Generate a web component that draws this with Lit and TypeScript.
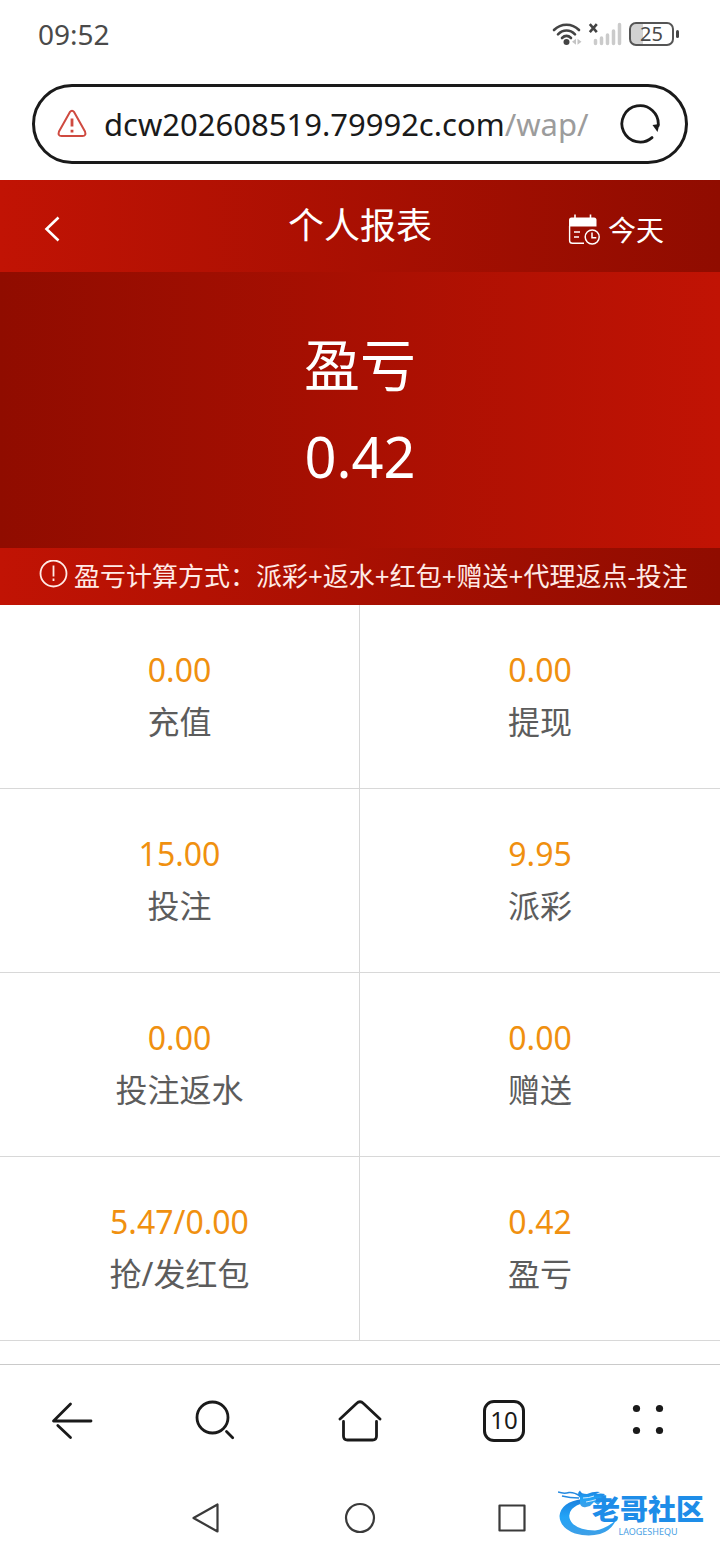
import { LitElement, html, css, svg } from "lit";
import { customElement, property } from "lit/decorators.js";

interface Stat {
  value: string;
  label: string;
}

const STATS: Stat[] = [
  { value: "0.00", label: "充值" },
  { value: "0.00", label: "提现" },
  { value: "15.00", label: "投注" },
  { value: "9.95", label: "派彩" },
  { value: "0.00", label: "投注返水" },
  { value: "0.00", label: "赠送" },
  { value: "5.47/0.00", label: "抢/发红包" },
  { value: "0.42", label: "盈亏" },
];

@customElement("status-bar")
export class StatusBar extends LitElement {
  static styles = css`
    :host {
      display: flex;
      align-items: center;
      justify-content: space-between;
      height: 68px;
      padding: 0 41px 0 38px;
      color: #4a4a4a;
    }
    .time {
      font-size: 28px;
      line-height: 36px;
    }
    .right {
      display: flex;
      align-items: center;
    }
    .battery {
      box-sizing: border-box;
      display: flex;
      align-items: center;
      justify-content: center;
      width: 45px;
      height: 24px;
      margin-left: 6px;
      border: 2px solid #555;
      border-radius: 7px;
      background: linear-gradient(to right, #d2d2d2 30%, #fff 30%);
      font-size: 20px;
      line-height: 20px;
    }
    .cap {
      width: 3px;
      height: 8px;
      margin-left: 2px;
      border-radius: 2px;
      background: #444;
    }
  `;

  render() {
    return html`
      <span class="time">09:52</span>
      <div class="right">
        <svg width="71" height="28" viewBox="0 0 71 28" fill="none" aria-hidden="true">
          <g stroke="#444" stroke-width="2.6" stroke-linecap="round">
            <path d="M2 10C9 3 20 3 27 10" />
            <path d="M6 14.3C11 9.3 18 9.3 23 14.3" />
            <path d="M10 18C12.8 15.2 16.2 15.2 19 18" />
          </g>
          <circle cx="14.500" cy="22" r="3" fill="#444" />
          <path d="M24 18.8v6l-4-3zM25.5 18.8v6l4-3z" fill="#c4c4c4" />
          <path d="M37.8 4.2l7 8M44.8 4.2l-7 8" stroke="#444" stroke-width="2.6" />
          <g stroke="#cbcbcb" stroke-width="3.5" stroke-linecap="round">
            <path d="M43.5 20.5v3M49.5 18v5.5M55.5 15v8.5M61.5 11v12.5M67.5 4.5v19" />
          </g>
        </svg>
        <span class="battery">25</span>
        <span class="cap"></span>
      </div>
    `;
  }
}

@customElement("address-bar")
export class AddressBar extends LitElement {
  static styles = css`
    :host {
      display: block;
      padding: 16px 32px;
    }
    .bar {
      box-sizing: border-box;
      display: flex;
      align-items: center;
      height: 80px;
      padding: 0 24px 0 22px;
      border: 3px solid #1a1a1a;
      border-radius: 40px;
      background: #fff;
    }
    button {
      display: flex;
      padding: 0;
      border: 0;
      background: none;
      color: #1a1a1a;
      font: inherit;
    }
    .url {
      flex: 1;
      min-width: 0;
      margin: 0 26px 0 17px;
      overflow: hidden;
      font-size: 31px;
      line-height: 48px;
      white-space: nowrap;
    }
    .path {
      color: #9c9c9c;
    }
    svg {
      flex: none;
    }
  `;

  render() {
    return html`
      <div class="bar">
        <svg width="30" height="30" viewBox="0 0 30 30" fill="none" stroke="#cf4a40" aria-hidden="true">
          <path
            d="M12.8 3.2Q15 0.4 17.2 3.2L28 22.5Q29.5 27 25.5 27H4.5Q0.5 27 2 22.5Z"
            stroke-width="2"
            stroke-linejoin="round"
          />
          <path d="M15 9.5v8M15 20.8v2.8" stroke-width="2.8" />
        </svg>
        <button class="url" aria-label="地址栏">
          <span>dcw202608519.79992c.com</span><span class="path">/wap/</span>
        </button>
        <button aria-label="刷新">
          <svg width="42" height="42" viewBox="0 0 42 42" fill="none">
            <path
              d="M33 34.6A18.2 18.2 0 1 1 39.2 22.5"
              stroke="#1a1a1a"
              stroke-width="2.8"
              stroke-linecap="round"
            />
            <path d="M33.5 22L40.5 21L38.5 29Z" fill="#1a1a1a" />
          </svg>
        </button>
      </div>
    `;
  }
}

@customElement("stat-cell")
export class StatCell extends LitElement {
  @property() value = "";
  @property() label = "";

  static styles = css`
    :host {
      box-sizing: border-box;
      display: block;
      padding: 39px 0 40px;
      border-bottom: 1px solid #d8d8d8;
      text-align: center;
      font-size: 32px;
      line-height: 52px;
    }
    .value {
      color: #f0900f;
    }
    .label {
      color: #5c5c5c;
    }
  `;

  render() {
    return html`
      <div class="value">${this.value}</div>
      <div class="label">${this.label}</div>
    `;
  }
}

@customElement("browser-toolbar")
export class BrowserToolbar extends LitElement {
  static styles = css`
    :host {
      display: grid;
      grid-template-columns: repeat(5, 1fr);
      height: 111px;
      border-top: 1px solid #cacaca;
    }
    button {
      display: flex;
      align-items: center;
      justify-content: center;
      padding: 0;
      border: 0;
      background: none;
      color: #1a1a1a;
      font: inherit;
    }
    .tabs {
      box-sizing: border-box;
      width: 42px;
      height: 42px;
      border: 3px solid #1a1a1a;
      border-radius: 11px;
      font-size: 24px;
      line-height: 34px;
    }
    svg {
      fill: none;
      stroke: currentColor;
      stroke-width: 2.8;
      stroke-linecap: round;
      stroke-linejoin: round;
    }
    .dots {
      fill: currentColor;
      stroke: none;
    }
  `;

  render() {
    return html`
      <button aria-label="后退">
        <svg width="44" height="44" viewBox="0 0 44 44">
          <path d="M20.5 5L3.5 22H41M7.8 26.5L20.5 38.5" />
        </svg>
      </button>
      <button aria-label="搜索">
        <svg width="44" height="44" viewBox="0 0 44 44">
          <circle cx="18.500" cy="18.500" r="15.500" />
          <path d="M32.5 32.5l6.2 6.2" />
        </svg>
      </button>
      <button aria-label="主页">
        <svg width="44" height="44" viewBox="0 0 44 44">
          <path d="M2 20L18.5 4.5Q22 1 25.5 4.5L42 20" />
          <path d="M5.5 22.5V37Q5.5 41 9.5 41H34.5Q38.5 41 38.5 37V22.5" />
        </svg>
      </button>
      <button aria-label="10 个标签页"><span class="tabs">10</span></button>
      <button aria-label="菜单">
        <svg class="dots" width="44" height="44" viewBox="0 0 44 44">
          <circle cx="10.500" cy="9.500" r="3.600" />
          <circle cx="33.500" cy="9.500" r="3.600" />
          <circle cx="10.500" cy="31.500" r="3.600" />
          <circle cx="33.500" cy="31.500" r="3.600" />
        </svg>
      </button>
    `;
  }
}

@customElement("system-nav")
export class SystemNav extends LitElement {
  static styles = css`
    :host {
      position: relative;
      display: flex;
      justify-content: center;
      gap: 120px;
      height: 84px;
    }
    button {
      display: flex;
      align-items: center;
      padding: 0;
      border: 0;
      background: none;
    }
    .key {
      fill: none;
      stroke: #3a3a3a;
      stroke-width: 2.2;
      stroke-linejoin: round;
    }
    .mark {
      position: absolute;
      right: 16px;
      top: 13px;
      display: flex;
    }
    .words {
      display: flex;
      flex-direction: column;
      gap: 4px;
      margin-left: -24px;
      padding-top: 6px;
    }
    .name {
      font-weight: 900;
      font-size: 28px;
      line-height: 28px;
      color: #1e8de8;
    }
    .latin {
      align-self: center;
      font-size: 9px;
      line-height: 10px;
      color: #4b9fe4;
    }
  `;

  render() {
    const key = (shape: unknown) =>
      html`<svg class="key" width="34" height="34" viewBox="0 0 34 34">${shape}</svg>`;
    return html`
      <button aria-label="返回">${key(svg`<path d="M4.5 17L28.5 3.5V30.5Z" />`)}</button>
      <button aria-label="桌面">${key(svg`<circle cx="17" cy="17" r="14" />`)}</button>
      <button aria-label="最近任务">${key(svg`<rect x="2.5" y="4.5" width="25" height="25" />`)}</button>
      <div class="mark">
        <svg width="58" height="50" viewBox="0 0 58 50" fill="none" aria-hidden="true">
          <defs>
            <linearGradient id="dragon" x1="0" y1="0" x2="0" y2="1">
              <stop offset="0" stop-color="#1a7fdd" />
              <stop offset="0.5" stop-color="#22a4f7" />
              <stop offset="1" stop-color="#3f9fe6" />
            </linearGradient>
          </defs>
          <path
            fill="url(#dragon)"
            d="M24 10Q3 13 1.5 27Q2 39 17 44.5Q30 48 42 45Q53 42 58 31Q48 40 37 41.5Q22 41 15 35Q8 27 14 20Q18 16 25 14Z"
          />
          <path
            fill="url(#dragon)"
            d="M22 9Q18 5 22 1.5Q23 5 29 5Q36 2 42 3L38 5Q43 4 47 5L44 8Q47 10 48 14L43 13L40 16L36 13L32 17L28 18Q24 19 22 15Z"
          />
          <path d="M0 3Q6 5 11 3.5Q16 3 22 7M4 7Q12 9 21 9" stroke="#2489e0" stroke-width="1.5" />
          <path d="M25 9Q31 9 36 7M28 13Q34 12 40 10" stroke="#d4ecfd" stroke-width="1" />
        </svg>
        <div class="words">
          <span class="name">老哥社区</span>
          <span class="latin">LAOGESHEQU</span>
        </div>
      </div>
    `;
  }
}

@customElement("app-root")
export class AppRoot extends LitElement {
  static styles = css`
    :host {
      display: flex;
      flex-direction: column;
      min-height: 100vh;
      background: #fff;
      font-family: "Noto Sans", "Noto Sans CJK SC", sans-serif;
    }
    .header {
      display: grid;
      grid-template-columns: 1fr auto 1fr;
      align-items: center;
      height: 92px;
      padding: 0 40px;
      background: linear-gradient(to right, #c11304, #900c00);
      color: #fff;
    }
    h1 {
      margin: 0;
      font-weight: 400;
      font-size: 36px;
      line-height: 52px;
    }
    button {
      display: flex;
      align-items: center;
      padding: 0;
      border: 0;
      background: none;
      color: inherit;
      font: inherit;
    }
    .back {
      justify-self: start;
      padding-top: 6px;
    }
    .date {
      justify-self: end;
      gap: 8px;
      padding: 8px 16px 0 0;
      font-size: 28px;
      line-height: 40px;
    }
    .hero {
      padding: 46px 0;
      background: linear-gradient(to right, #900c00, #c11304);
      color: #fff;
      text-align: center;
      font-size: 56px;
      line-height: 92px;
    }
    .note {
      box-sizing: border-box;
      display: flex;
      align-items: center;
      gap: 6px;
      height: 57px;
      padding: 0 0 4px 39px;
      background: linear-gradient(to right, #c11304, #900c00);
      color: #ffeae6;
      font-size: 26px;
      white-space: nowrap;
    }
    .stats {
      display: grid;
      grid-template-columns: 1fr 1fr;
    }
    .stats stat-cell:nth-child(odd) {
      border-right: 1px solid #d8d8d8;
    }
    .space {
      flex: 1;
    }
    svg {
      flex: none;
    }
  `;

  render() {
    return html`
      <status-bar></status-bar>
      <address-bar></address-bar>
      <header class="header">
        <button class="back" aria-label="返回">
          <svg width="24" height="28" viewBox="0 0 24 28" fill="none">
            <path d="M18.5 2.5L6.5 14L18.5 25.5" stroke="#fff" stroke-width="2.6" />
          </svg>
        </button>
        <h1>个人报表</h1>
        <button class="date">
          <svg width="33" height="32" viewBox="0 0 33 32" fill="none" stroke="#fff" aria-hidden="true">
            <path d="M8 0.5v5M23.5 0.5v5" stroke-width="1.6" />
            <path d="M2 12.5V6Q2 3.500 4.5 3.5H27Q29.500 3.5 29.5 6V12.5Z" fill="#fff" stroke="none" />
            <path d="M2.6 12V26.5Q2.6 29.3 5.4 29.3H17M7 18H13M7 23H12" stroke-width="1.4" />
            <circle cx="25.200" cy="23" r="7" stroke-width="1.5" />
            <path d="M25 18.500V23.800H29.300" stroke-width="1.5" />
          </svg>
          <span>今天</span>
        </button>
      </header>
      <section class="hero">
        <div>盈亏</div>
        <div>0.42</div>
      </section>
      <div class="note">
        <svg width="29" height="29" viewBox="0 0 29 29" fill="none" stroke="#ffeae6" aria-hidden="true">
          <circle cx="14.500" cy="13.500" r="13" stroke-width="1.8" />
          <path d="M14.5 5.5v11M14.5 18.500v2.5" stroke-width="1.8" />
        </svg>
        <span>盈亏计算方式：派彩+返水+红包+赠送+代理返点-投注</span>
      </div>
      <main class="stats">
        ${STATS.map((s) => html`<stat-cell .value=${s.value} .label=${s.label}></stat-cell>`)}
      </main>
      <div class="space"></div>
      <browser-toolbar></browser-toolbar>
      <system-nav></system-nav>
    `;
  }
}
